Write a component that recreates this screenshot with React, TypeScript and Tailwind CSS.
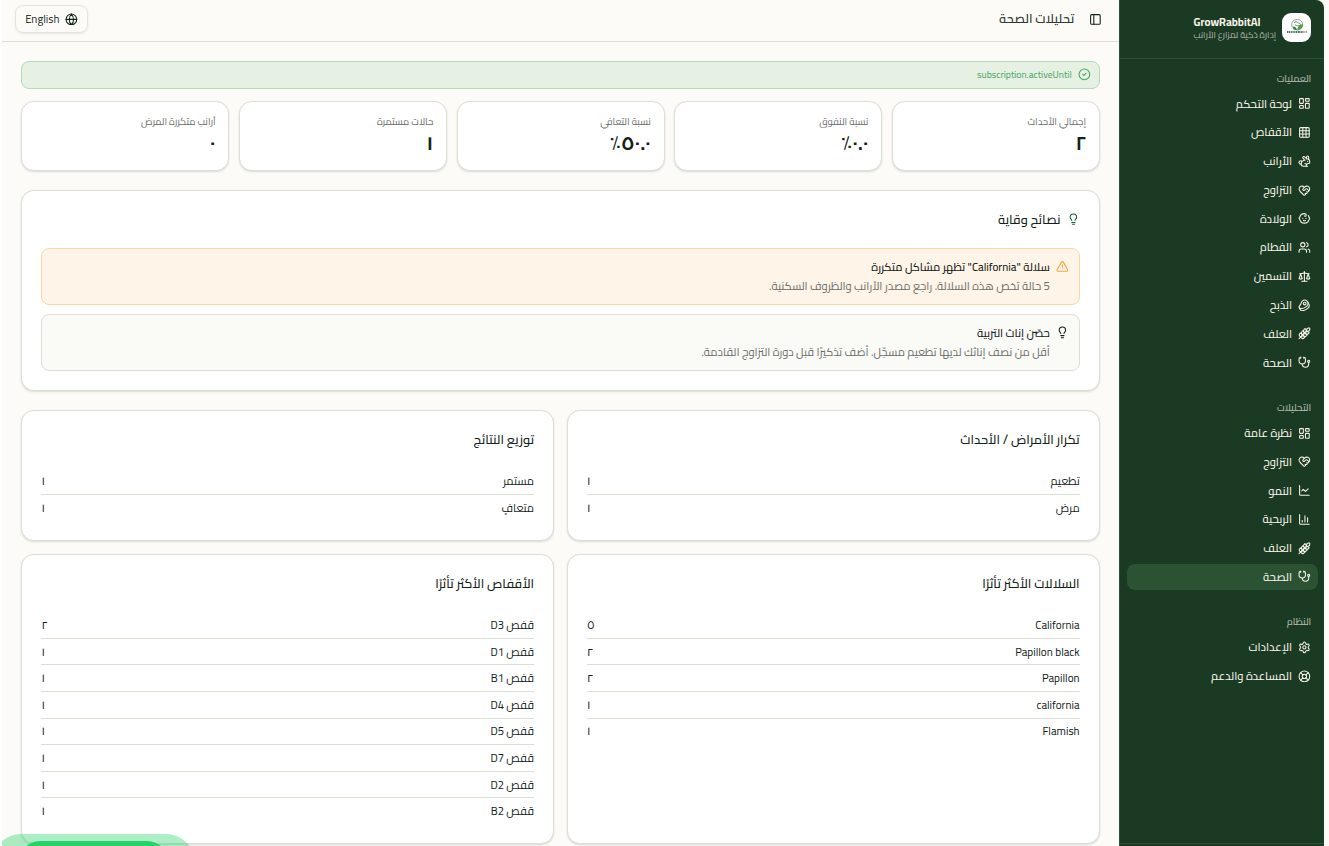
import type { ReactNode } from "react";
import {
  Baby,
  Beef,
  ChartColumn,
  ChartLine,
  CircleCheck,
  Globe,
  Grid3x3,
  HeartHandshake,
  LayoutDashboard,
  LifeBuoy,
  Lightbulb,
  PanelLeft,
  Rabbit,
  Scale,
  Settings,
  Stethoscope,
  TriangleAlert,
  Users,
  Wheat,
  type LucideIcon,
} from "lucide-react";

type NavItem = { label: string; icon: LucideIcon; active?: boolean };
type Row = [string, string];

const groups: { title: string; items: NavItem[] }[] = [
  {
    title: "العمليات",
    items: [
      { label: "لوحة التحكم", icon: LayoutDashboard },
      { label: "الأقفاص", icon: Grid3x3 },
      { label: "الأرانب", icon: Rabbit },
      { label: "التزاوج", icon: HeartHandshake },
      { label: "الولادة", icon: Baby },
      { label: "الفطام", icon: Users },
      { label: "التسمين", icon: Scale },
      { label: "الذبح", icon: Beef },
      { label: "العلف", icon: Wheat },
      { label: "الصحة", icon: Stethoscope },
    ],
  },
  {
    title: "التحليلات",
    items: [
      { label: "نظرة عامة", icon: LayoutDashboard },
      { label: "التزاوج", icon: HeartHandshake },
      { label: "النمو", icon: ChartLine },
      { label: "الربحية", icon: ChartColumn },
      { label: "العلف", icon: Wheat },
      { label: "الصحة", icon: Stethoscope, active: true },
    ],
  },
  {
    title: "النظام",
    items: [
      { label: "الإعدادات", icon: Settings },
      { label: "المساعدة والدعم", icon: LifeBuoy },
    ],
  },
];

const stats: Row[] = [
  ["إجمالي الأحداث", "٢"],
  ["نسبة النفوق", "٠.٠٪"],
  ["نسبة التعافي", "٥٠.٠٪"],
  ["حالات مستمرة", "١"],
  ["أرانب متكررة المرض", "٠"],
];

const tables: { title: string; rows: Row[] }[] = [
  { title: "تكرار الأمراض / الأحداث", rows: [["تطعيم", "١"], ["مرض", "١"]] },
  { title: "توزيع النتائج", rows: [["مستمر", "١"], ["متعافٍ", "١"]] },
  {
    title: "السلالات الأكثر تأثرًا",
    rows: [
      ["California", "٥"],
      ["Papillon black", "٢"],
      ["Papillon", "٢"],
      ["california", "١"],
      ["Flamish", "١"],
    ],
  },
  {
    title: "الأقفاص الأكثر تأثرًا",
    rows: [
      ["قفص D3", "٢"],
      ["قفص D1", "١"],
      ["قفص B1", "١"],
      ["قفص D4", "١"],
      ["قفص D5", "١"],
      ["قفص D7", "١"],
      ["قفص D2", "١"],
      ["قفص B2", "١"],
    ],
  },
];

function Logo() {
  return (
    <div className="flex size-[28.8px] shrink-0 items-center justify-center rounded-[9px] bg-white">
      <svg viewBox="0 0 24 24" className="size-[24px]" fill="none">
        <path d="M7 11.500c-1-4.500 1.500-6.900 5.200-6.900 3.600 0 5.800 2.600 5.200 5.900" stroke="#7d9c86" strokeWidth=".9" />
        <path d="M9 8c1.500-1.800 3.700-1.300 4.500.2 1.300.1 2.200.8 2.200 1.800-1.600 1.200-4.300 1-5.700-.3" stroke="#51795c" strokeWidth=".8" />
        <path d="M7.500 11.500c2.700.1 4 1.400 4.700 3.700-2.700.1-4.600-1.100-4.700-3.700Z" fill="#2f7d3b" />
        <path d="M12.200 15.400c.1-3.500 2.100-5.800 6-6.300-.1 3.800-2.200 6.100-6 6.300Z" fill="#4fa23f" />
        <path d="M2 17h12.500" stroke="#234c31" strokeWidth="1.600" strokeDasharray="1.300 .5" />
        <path d="M14.200 17h5" stroke="#333" strokeWidth="1.600" strokeDasharray="1.100 .5" />
        <path d="M19.500 17h2.700" stroke="#62ad48" strokeWidth="1.600" strokeDasharray="1 .5" />
      </svg>
    </div>
  );
}

function Sidebar() {
  return (
    <aside className="flex h-full w-[205px] shrink-0 flex-col rounded-tr-[8px] border-l border-[#2b5236] bg-[#1b3a23] text-[#f5f3e8]">
      <div className="flex h-[59px] shrink-0 items-center gap-[6.4px] border-b border-[#2b5236] pb-[3px] pr-[12.8px]">
        <Logo />
        <div className="flex flex-col">
          <span dir="ltr" className="text-left text-[11.2px] font-bold leading-[14px]">
            GrowRabbitAI
          </span>
          <span className="text-[8.8px] leading-[12px] text-[#f5f3e8]/70">إدارة ذكية لمزارع الأرانب</span>
        </div>
      </div>
      <nav className="flex grow flex-col gap-[19.2px] pl-[7.2px] pr-[6.4px] pt-[6.200px]">
        {groups.map((g) => (
          <div key={g.title}>
            <div className="flex h-[25.6px] items-center px-[6.4px] text-[9.6px] font-medium text-[#f5f3e8]/70">
              {g.title}
            </div>
            <ul className="flex flex-col gap-[3.2px]">
              {g.items.map(({ label, icon: Icon, active }) => (
                <li
                  key={label}
                  className={`flex h-[25.6px] items-center gap-[6.4px] rounded-[8px] px-[6.4px] text-[11.2px] font-medium leading-[16px] ${
                    active ? "bg-[#2a5233]" : ""
                  }`}
                >
                  <Icon className="size-[12.8px] shrink-0" />
                  <span>{label}</span>
                </li>
              ))}
            </ul>
          </div>
        ))}
      </nav>
      <div className="h-[3px] shrink-0 border-t border-[#2b5236]" />
    </aside>
  );
}

function Card({ children, className = "" }: { children: ReactNode; className?: string }) {
  return (
    <section
      className={`rounded-[12.8px] border border-[#dcdfd3] bg-white shadow-[0_1px_2px_rgba(27,58,35,0.16)] ${className}`}
    >
      {children}
    </section>
  );
}

function Tip({ icon: Icon, title, text, warn }: { icon: LucideIcon; title: string; text: string; warn?: boolean }) {
  return (
    <div
      className={`flex h-[56.8px] gap-[6.4px] rounded-[8px] border px-[9.600px] pt-[9.600px] ${
        warn ? "border-[#fad6a0] bg-[#fef4e7]" : "border-[#dcdfd3] bg-[#fafaf7]"
      }`}
    >
      <Icon className={`mt-[1.600px] size-[12.8px] shrink-0 ${warn ? "text-[#f7a53b]" : "text-[#14231a]"}`} />
      <div>
        <p className="text-[11.2px] font-medium leading-[16px] text-[#14231a]">{title}</p>
        <p className="mt-[3.2px] text-[11.2px] leading-[16px] text-[#6a6d6a]">{text}</p>
      </div>
    </div>
  );
}

export default function App() {
  return (
    <div
      dir="rtl"
      className="relative flex h-[846px] w-[1329px] overflow-hidden border-l-2 border-white bg-[#fcfbf7] pr-[5px] font-['Cairo','Noto_Sans_Arabic','Open_Sans',sans-serif] text-[#14231a]"
    >
      <Sidebar />
      <div className="flex min-w-0 grow flex-col">
        <header className="flex h-[42px] shrink-0 items-center justify-between border-b border-[#dcdfd3] pb-[3px] pl-[12.800px] pr-[12.800px]">
          <div className="flex items-center gap-[9.600px]">
            <button className="flex size-[22.4px] items-center justify-center">
              <PanelLeft className="size-[12.8px]" />
            </button>
            <h1 className="text-[12.8px] font-semibold leading-[19px] text-[#14231a]/90">تحليلات الصحة</h1>
          </div>
          <button className="flex h-[28.8px] items-center gap-[5.600px] rounded-[8px] border border-[#e3e4da] px-[9.400px] text-[11.2px] font-medium shadow-[0_1px_2px_rgba(27,58,35,0.1)]">
            <Globe className="size-[12.8px]" />
            <span className="text-[#14231a]/90">English</span>
          </button>
        </header>
        <main className="flex flex-col pl-[19.400px] pr-[19.200px] pt-[19.2px]">
          <div className="flex h-[28px] items-center gap-[6.4px] rounded-[8px] border border-[#b2dabb] bg-[#e6f0e3] px-[8px] pb-[1px] text-[9.6px] text-[#4aa564]">
            <CircleCheck className="size-[12.8px]" />
            <span>subscription.activeUntil</span>
          </div>
          <div className="mt-[12px] grid grid-cols-5 gap-[9.600px]">
            {stats.map(([label, value]) => (
              <Card key={label} className="h-[70px] px-[12.8px] pt-[12.8px]">
                <p className="text-[9.6px] leading-[12.8px] text-[#6a6d6a]">{label}</p>
                <p className="mt-[3.2px] text-[19.2px] font-bold leading-[25.6px]">{value}</p>
              </Card>
            ))}
          </div>
          <Card className="mt-[19.2px] py-[19.2px] pl-[19px] pr-[19.2px]">
            <h2 className="flex items-center gap-[6.4px] text-[12.8px] font-medium leading-[17px]">
              <Lightbulb className="size-[12.8px] text-[#1d6236]" />
              نصائح وقاية
            </h2>
            <div className="mt-[20.500px] flex flex-col gap-[9.100px]">
              <Tip
                warn
                icon={TriangleAlert}
                title={'سلالة "California" تظهر مشاكل متكررة'}
                text="5 حالة تخص هذه السلالة. راجع مصدر الأرانب والظروف السكنية."
              />
              <Tip
                icon={Lightbulb}
                title="حصّن إناث التربية"
                text="أقل من نصف إناثك لديها تطعيم مسجّل. أضف تذكيرًا قبل دورة التزاوج القادمة."
              />
            </div>
          </Card>
          <div className="mt-[19.2px] grid grid-cols-2 gap-x-[12.8px] gap-y-[13.100px]">
            {tables.map((t) => (
              <Card key={t.title} className="py-[19.2px] pl-[19px] pr-[19.2px]">
                <h2 className="text-[12.8px] font-medium leading-[19.2px]">{t.title}</h2>
                <ul className="mt-[18.900px]">
                  {t.rows.map(([name, count]) => (
                    <li
                      key={name}
                      className="flex justify-between border-b border-[#dcdfd3] py-[4.800px] text-[11.2px] leading-[16px] last:border-b-0"
                    >
                      <span>{name}</span>
                      <span className="font-medium">{count}</span>
                    </li>
                  ))}
                </ul>
              </Card>
            ))}
          </div>
        </main>
      </div>
      <div className="absolute -left-[10px] top-[834px] h-[58px] w-[203px] rounded-full bg-[#25d366]/38" />
      <div className="absolute left-[16px] top-[841px] h-[44px] w-[151px] rounded-full bg-[#25d366]" />
    </div>
  );
}
